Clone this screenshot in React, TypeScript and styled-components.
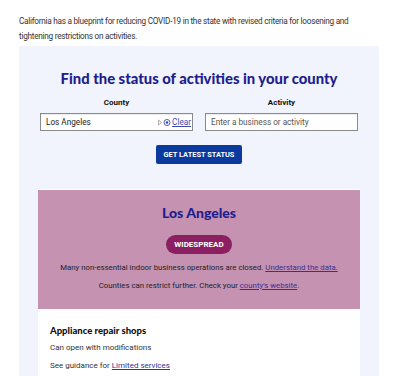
import React from "react";
import styled, { createGlobalStyle } from "styled-components";

const GlobalStyle = createGlobalStyle`
  body {
    margin: 0;
    background: #fff;
    font-family: Roboto, "Liberation Sans", Arial, sans-serif;
    color: #222;
  }
`;

const Page = styled.div`
  width: 400px;
  padding: 14px 21px 0 19px;
  box-sizing: border-box;
`;

const Intro = styled.p`
  margin: 0 0 2px;
  font-size: 8.2px;
  letter-spacing: -0.25px;
  line-height: 15px;
  color: #333;
`;

const Panel = styled.section`
  background: #f1f4fc;
  padding: 22px 0 0;
  display: flex;
  flex-direction: column;
  align-items: center;
`;

const Title = styled.h2`
  margin: 0;
  font-family: Lato, "Liberation Sans", sans-serif;
  font-weight: 900;
  font-size: 14.8px;
  line-height: 20px;
  color: #1d1d8e;
`;

const Form = styled.div`
  align-self: stretch;
  display: grid;
  grid-template-columns: 1fr 1fr;
  gap: 0 12px;
  padding: 0 21px;
  margin-top: 9px;
`;

const Field = styled.label`
  display: flex;
  flex-direction: column;
  align-items: stretch;
`;

const Label = styled.span`
  font-size: 8px;
  font-weight: 700;
  line-height: 12px;
  text-align: center;
  color: #111;
  margin-bottom: 4px;
`;

const InputBox = styled.div<{ $placeholder?: boolean }>`
  height: 18px;
  box-sizing: border-box;
  border: 1px solid #8a8a8a;
  box-shadow: inset 0 1px 1px rgba(0, 0, 0, 0.08);
  background: #fff;
  display: flex;
  align-items: center;
  padding: 0 1px 0 5px;
  font-size: 8.2px;
  color: ${(p) => (p.$placeholder ? "#555" : "#222")};
`;

const Value = styled.span`
  flex: 1;
`;

const ClearArea = styled.span`
  display: flex;
  align-items: center;
  gap: 1px;
  color: #3a49b0;
`;

const ClearLink = styled.a`
  color: #3a49b0;
  text-decoration: underline;
  font-size: 8.2px;
`;

const Button = styled.button`
  margin-top: 14px;
  height: 19px;
  width: 86px;
  border: none;
  border-radius: 2px;
  background: #0a3a9e;
  color: #fff;
  font-family: Roboto, "Liberation Sans", sans-serif;
  font-weight: 700;
  font-size: 7.4px;
  padding: 0;
`;

const Card = styled.div`
  align-self: stretch;
  margin: 25px 19px 0;
  background: #fff;
`;

const Status = styled.div`
  background: #c692b2;
  border-top: 1px solid #fff;
  padding: 14px 10px 17px;
  display: flex;
  flex-direction: column;
  align-items: center;
`;

const County = styled.h3`
  margin: 0;
  font-family: Lato, "Liberation Sans", sans-serif;
  font-weight: 900;
  font-size: 14px;
  line-height: 18px;
  color: #1d1d8e;
`;

const Badge = styled.span`
  margin-top: 13px;
  height: 19px;
  width: 66px;
  border-radius: 10px;
  background: #8b1f62;
  color: #fff;
  font-weight: 700;
  font-size: 8px;
  display: flex;
  align-items: center;
  justify-content: center;
`;

const StatusText = styled.p<{ $gap: number }>`
  margin: ${(p) => p.$gap}px 0 0;
  font-size: 7.8px;
  line-height: 12px;
  color: #222;
  text-align: center;
`;

const Link = styled.a`
  color: #3b2f95;
  text-decoration: underline;
`;

const Details = styled.div`
  padding: 15px 12px 20px;
`;

const Activity = styled.h4`
  margin: 0;
  font-family: Lato, "Liberation Sans", sans-serif;
  font-weight: 900;
  font-size: 9.5px;
  line-height: 13px;
  color: #111;
`;

const DetailText = styled.p<{ $gap: number }>`
  margin: ${(p) => p.$gap}px 0 0;
  font-size: 8px;
  line-height: 12px;
  color: #333;
`;

const ClearIcons = () => (
  <svg width="13" height="7" viewBox="0 0 13 7">
    <path d="M0.5 1 L3.5 3.5 L0.5 6 Z" fill="none" stroke="#999" strokeWidth="0.8" />
    <circle cx="9" cy="3.5" r="3" fill="none" stroke="#3a49b0" strokeWidth="0.9" />
    <circle cx="9" cy="3.5" r="1.3" fill="#3a49b0" />
  </svg>
);

export default function App() {
  return (
    <Page>
      <GlobalStyle />
      <Intro>
        California has a blueprint for reducing COVID-19 in the state with revised criteria for loosening and
        tightening restrictions on activities.
      </Intro>
      <Panel>
        <Title>Find the status of activities in your county</Title>
        <Form>
          <Field>
            <Label>County</Label>
            <InputBox>
              <Value>Los Angeles</Value>
              <ClearArea>
                <ClearIcons />
                <ClearLink>Clear</ClearLink>
              </ClearArea>
            </InputBox>
          </Field>
          <Field>
            <Label>Activity</Label>
            <InputBox $placeholder>
              <Value>Enter a business or activity</Value>
            </InputBox>
          </Field>
        </Form>
        <Button>GET LATEST STATUS</Button>
        <Card>
          <Status>
            <County>Los Angeles</County>
            <Badge>WIDESPREAD</Badge>
            <StatusText $gap={8}>
              Many non-essential indoor business operations are closed. <Link>Understand the data.</Link>
            </StatusText>
            <StatusText $gap={6}>
              Counties can restrict further. Check your <Link>county's website</Link>.
            </StatusText>
          </Status>
          <Details>
            <Activity>Appliance repair shops</Activity>
            <DetailText $gap={5}>Can open with modifications</DetailText>
            <DetailText $gap={6}>
              See guidance for <Link>Limited services</Link>
            </DetailText>
          </Details>
        </Card>
      </Panel>
    </Page>
  );
}
